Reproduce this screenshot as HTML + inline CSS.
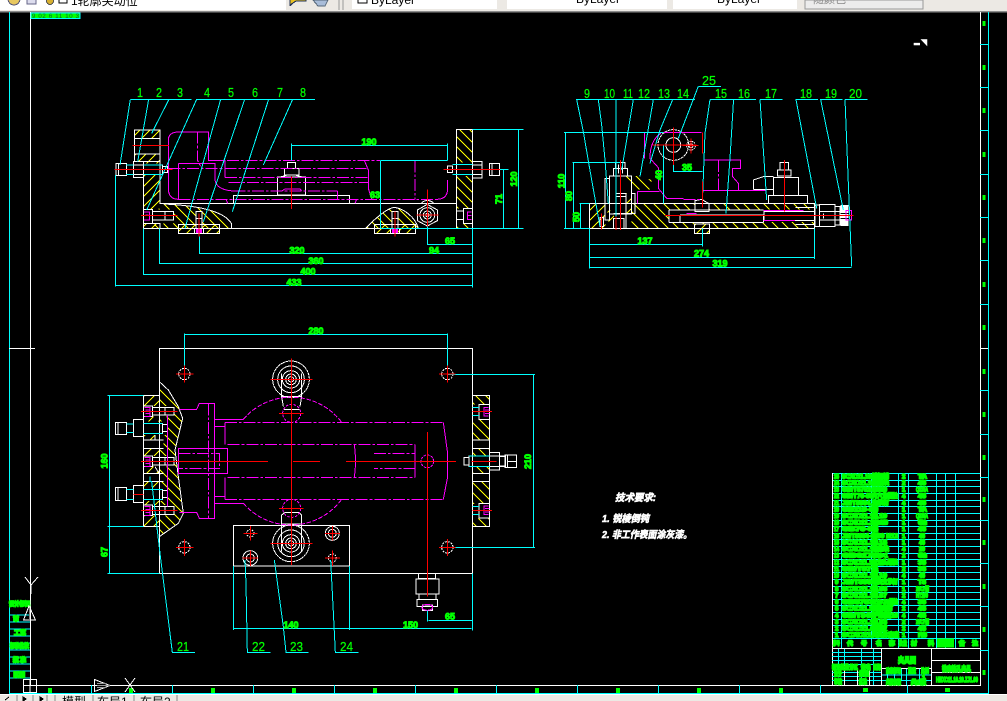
<!DOCTYPE html>
<html><head><meta charset="utf-8"><style>
html,body{margin:0;padding:0;background:#000;width:1007px;height:701px;overflow:hidden}
svg{display:block;shape-rendering:crispEdges}
text{font-family:"Liberation Sans","Noto Sans CJK SC",sans-serif}
.w path,.w circle,.w polygon{fill:none;stroke:#fff}
.c path{fill:none;stroke:#0ff}
.m path,.m circle,.m ellipse{fill:none;stroke:#f0f}
.md path{fill:none;stroke:#f0f;stroke-dasharray:36 6 8 6}
.r path{fill:none;stroke:#f00}
.l text{fill:#0f0;stroke:#0f0;stroke-width:.25;font-size:13px}
.d text{fill:#0f0;stroke:#0f0;stroke-width:1;font-size:9px;font-weight:bold;text-anchor:middle}
.t text{fill:#0f0;stroke:#0f0;stroke-width:1.5;font-size:6px;font-weight:bold}
.n text{fill:#fff;stroke:#fff;stroke-width:.6;font-size:10px;font-weight:bold;font-style:italic}
</style></head><body>
<svg width="1007" height="701" viewBox="0 0 1007 701" xmlns="http://www.w3.org/2000/svg">
<defs>
<pattern id="a" patternUnits="userSpaceOnUse" width="30" height="30"><path d="M0 30L30 0M-3 3L3 -3M27 33L33 27" stroke="#ff0" stroke-width="3"/></pattern>
<pattern id="b" patternUnits="userSpaceOnUse" width="30" height="30"><path d="M0 0L30 30M-3 27L3 33M27 -3L33 3" stroke="#ff0" stroke-width="3"/></pattern>
</defs>
<rect width="1007" height="701" fill="#000"/>

<!-- top toolbar -->
<rect x="0" y="0" width="1007" height="11" fill="#ece9e4"/>
<rect x="0" y="11" width="1007" height="1.5" fill="#8c8c8c"/>
<rect x="0" y="0" width="286" height="10" fill="#fff"/>
<rect x="286" y="0" width="50" height="10" fill="#ece9e4"/>
<rect x="352" y="0" width="145" height="9" fill="#fff"/>
<rect x="507" y="0" width="160" height="9" fill="#fff"/>
<rect x="673" y="0" width="124" height="9" fill="#fff"/>
<rect x="805" y="0" width="118" height="9" fill="#ececec" stroke="#999"/>
<circle cx="14" cy="-1" r="6" fill="#e8c860" stroke="#557"/>
<rect x="27" y="-3" width="9" height="7" fill="#dde" stroke="#668"/>
<circle cx="50" cy="1" r="3.5" fill="#d8b030" stroke="#555"/>
<rect x="59" y="-3" width="8" height="6" fill="#fff" stroke="#000"/>
<path d="M290 5L296 1H306V-2H290ZM292 4l-2 2" fill="#e8c020" stroke="#235"/>
<path d="M313 0H328L325 6H318Z" fill="#a8bcd8" stroke="#567"/>
<path d="M339 0V10M343 0V10" stroke="#999"/>
<rect x="358" y="-3" width="9" height="6" fill="#fff" stroke="#000"/>
<text x="71" y="5" font-size="12" fill="#000">1轮廓尖动位</text>
<text x="371" y="4" font-size="12" fill="#000">ByLayer</text>
<text x="576" y="3" font-size="12" fill="#000">ByLayer</text>
<text x="717" y="3" font-size="12" fill="#000">ByLayer</text>
<text x="813" y="3" font-size="11" fill="#888">随颜色</text>

<!-- frame -->
<path d="M9.5 12V693.5H988.5V12" fill="none" stroke="#0ff"/>
<path d="M30.5 12V685.5H980.5V12M9 348.5H35M980 348.5H988" fill="none" stroke="#fff"/>
<path d="M980 44.5H988M980 87.5H988M980 130.5H988M980 174.5H988M980 217.5H988M980 260.5H988M980 304.5H988M980 390.5H988M980 434.5H988M980 477.5H988M980 520.5H988M980 563.5H988M980 606.5H988M980 650.5H988M91.5 685V693M172.5 685V693M253.5 685V693M334.5 685V693M415.5 685V693M496.5 685V693M577.5 685V693M658.5 685V693M739.5 685V693M820.5 685V693M907.5 685V693" fill="none" stroke="#0ff"/>
<g fill="#0f0">
<rect x="982.5" y="21" width="3" height="5"/><rect x="982.5" y="65" width="3" height="5"/><rect x="982.5" y="108" width="3" height="5"/><rect x="982.5" y="152" width="3" height="5"/><rect x="982.5" y="195" width="3" height="5"/><rect x="982.5" y="238" width="3" height="5"/><rect x="982.5" y="282" width="3" height="5"/><rect x="982.5" y="325" width="3" height="5"/><rect x="982.5" y="369" width="3" height="5"/><rect x="982.5" y="412" width="3" height="5"/><rect x="982.5" y="455" width="3" height="5"/><rect x="982.5" y="497" width="3" height="5"/><rect x="982.5" y="540" width="3" height="5"/><rect x="982.5" y="584" width="3" height="5"/><rect x="982.5" y="627" width="3" height="5"/><rect x="982.5" y="670" width="3" height="5"/>
<rect x="48" y="688" width="4" height="5"/><rect x="129" y="688" width="4" height="5"/><rect x="211" y="688" width="4" height="5"/><rect x="292" y="688" width="4" height="5"/><rect x="373" y="688" width="4" height="5"/><rect x="454" y="688" width="4" height="5"/><rect x="535" y="688" width="4" height="5"/><rect x="616" y="688" width="4" height="5"/><rect x="697" y="688" width="4" height="5"/><rect x="779" y="688" width="4" height="5"/><rect x="863" y="688" width="5" height="4"/><rect x="945" y="688" width="5" height="4"/>
</g>
<rect x="31" y="13" width="49" height="5.5" fill="#0f0" stroke="#0ff"/>
<text x="32" y="18" font-size="6" fill="#063" textLength="47" lengthAdjust="spacing">9 02 6 11 10 3</text>

<!-- left title strip -->
<path d="M9 602H30M9 615H30M9 622H30M9 629H30M9 636H30M9 643H30M9 650H30M9 657H30M9 664H30M9 671H30M9 678H30" fill="none" stroke="#0ff"/>
<g class="t">
<text x="9" y="606" textLength="21" lengthAdjust="spacingAndGlyphs">设计标记</text>
<text x="13" y="621" textLength="4">审</text>
<text x="14" y="635" textLength="12" lengthAdjust="spacing">工 艺</text>
<text x="10" y="648" textLength="19" lengthAdjust="spacingAndGlyphs">标准化校</text>
<text x="13" y="662" textLength="13" lengthAdjust="spacing">批 准</text>
<text x="13" y="677" textLength="12" lengthAdjust="spacingAndGlyphs">日期</text>
</g>

<!-- UCS icons -->
<path d="M25 577L31 585L38 577M31 585V594" fill="none" stroke="#fff"/>
<path d="M29 606L23.5 620H35.5Z" fill="none" stroke="#fff"/>
<path d="M29.5 609V619" stroke="#888"/>
<rect x="23.5" y="679.5" width="13" height="13" fill="none" stroke="#fff"/>
<path d="M30 679V693M23 685.5H37" stroke="#fff"/>
<path d="M94.5 679.5V691.5L110 685.5Z" fill="none" stroke="#fff"/>
<path d="M97 685.5H110M97 683.5H106M97 687.5H106" stroke="#999"/>
<path d="M125 678L135 692M135 678L125 692" stroke="#fff"/>

<!-- FRONT VIEW -->
<g transform="translate(100,80) scale(.33333)" stroke-width="3">
<g>
<rect x="103" y="148" width="77" height="27" fill="url(#a)"/>
<rect x="103" y="222" width="77" height="23" fill="url(#a)"/>
<rect x="130" y="245" width="50" height="200" fill="url(#a)"/>
<path d="M190 372C260 375 370 385 395 432V445H160L180 372Z" fill="url(#b)"/>
<rect x="235" y="433" width="124" height="28" fill="url(#a)"/>
<path d="M797 445C820 420 860 385 882 382C910 385 945 410 955 445Z" fill="url(#b)"/>
<rect x="823" y="433" width="124" height="28" fill="url(#a)"/>
<rect x="1069" y="148" width="49" height="297" fill="url(#b)"/>
<rect x="130" y="250" width="60" height="34" fill="#000"/>
<rect x="130" y="388" width="90" height="42" fill="#000"/>
<rect x="1057" y="248" width="90" height="40" fill="#000"/>
<rect x="1070" y="385" width="48" height="45" fill="#000"/>
<rect x="288" y="395" width="18" height="50" fill="#000"/>
<rect x="876" y="395" width="18" height="50" fill="#000"/>
</g>
<g class="w">
<path d="M103 150H180V245H103ZM103 175H180M103 222H180M130 245V445M180 245V372M130 445H1118M180 370H1069M1069 148H1118V445H1069Z"/>
<path d="M48 250H80V287H48ZM56 250V287M100 245H130V293H100ZM100 255H130M100 283H130M130 255H188V283H130ZM188 260H203V278H188Z"/>
<path d="M1043 258H1057V278H1043ZM1118 244H1146V294H1118ZM1118 255H1146M1118 283H1146M1168 250H1198V287H1168ZM1176 250V287"/>
<path d="M130 388H158V430H130ZM158 395H220V420H158ZM195 395V420M130 430H180V445"/>
<path d="M1070 393H1090V418H1070ZM1090 385H1118V430H1090Z"/>
<path d="M288 395H306V445H288ZM283 445H311V461H283ZM288 415H306M876 395H894V445H876ZM871 445H899V461H871ZM876 415H894"/>
<path d="M563 247H587V265H563ZM553 265H597V285H553ZM540 291L563 285H585L607 291M533 291H617V345H533ZM400 346H748V370H400Z"/>
<path d="M235 433H359V461H235ZM823 433H947V461H823ZM190 372C260 375 370 385 395 432V445M797 445C820 420 860 385 882 382C910 385 945 410 955 445"/>
<polygon points="982,373 1012,390 1012,422 982,438 952,422 952,390"/>
<circle cx="982" cy="405" r="22"/><circle cx="982" cy="405" r="12"/><circle cx="982" cy="405" r="5"/>
<path d="M965 368Q982 355 1000 368"/>
</g>
<g class="md">
<path d="M325 241H840M205 265H800M375 293H805M385 307H805M292 155V240L305 265M400 333H713M945 241V358M235 358H1010"/>
</g>
<g class="m">
<path d="M205 180Q205 157 235 156H325V241H375V293M205 180V325Q205 358 235 358M1010 358Q1043 358 1043 325V300M235 250V358M235 250H345V300Q350 330 400 333M713 333V358M793 241L805 270V325L815 358M378 358L383 370M765 370L770 358M545 333L555 327H600L605 333"/>
<path d="M132 396H148V420H132M136 405H146M1115 396H1102V418H1115M1104 407H1115" stroke-width="3"/>
</g>
<rect x="288" y="447" width="18" height="12" fill="#f0f"/>
<rect x="876" y="447" width="18" height="12" fill="#f0f"/>
<g class="c">
<path d="M575 190V241M575 196H1043M1043 190V241M841 241H1043M841 241V445M841 445H1118M1118 148H1270M1255 148V445M1118 445H1270M1200 268H1225M1210 268V445"/>
<path d="M982 440V493H1118M298 470V520H1118M179 445V550H1118M130 445V583H1118M47 285V620M47 617H1118M1117 445V622M78 255H100M78 283H100M130 255H188M130 283H188M1057 253H1118M1057 283H1118"/>
<path d="M91 58H275M290 58H645M91 58L60 255M146 58L113 245M207 58L155 160M290 58L140 390M362 58L255 445M434 58L310 425M506 58L397 395M578 58L490 255"/>
</g>
<g class="r">
<path d="M97 196H207M43 268H218M123 406H233M1030 268H1200M950 405H1015M982 328V440M297 400V470M885 395V470M574 290V387"/>
</g>
</g>

<!-- SIDE VIEW -->
<g transform="translate(550,70) scale(.33333)" stroke-width="3">
<rect x="118" y="400" width="48" height="75" fill="url(#a)"/>
<rect x="245" y="400" width="548" height="75" fill="url(#b)"/>
<path d="M225 318H270L305 330V358H240Z" fill="url(#b)"/>
<rect x="355" y="420" width="290" height="38" fill="#000"/>
<rect x="640" y="418" width="155" height="38" fill="#000"/>
<rect x="435" y="400" width="42" height="25" fill="#000"/>
<rect x="433" y="462" width="46" height="29" fill="#000"/>
<rect x="433" y="462" width="46" height="29" fill="url(#a)"/>
<rect x="166" y="400" width="79" height="75" fill="#000"/>
<rect x="172" y="420" width="20" height="35" fill="url(#a)"/>
<rect x="226" y="370" width="20" height="60" fill="url(#a)"/>
<g class="w">
<path d="M118 400H793V475H118ZM357 420H640M357 458H640M357 420V458M390 435H640V458M390 435V458M642 425H795V452H642ZM737 412H795M737 464H795"/>
<path d="M795 405H808V470H795ZM808 403H855V425H808ZM808 450H855V470H808ZM808 425H870M808 450H870M855 410H870V465H855ZM820 430V446"/>
<path d="M435 400V392L455 388L475 400ZM435 400H477V425H435ZM433 462H479V491H433Z"/>
<path d="M190 295H232V318H190ZM197 278H225V295H197ZM205 283V310M218 283V310M178 318H245V432H178ZM165 325H178V450H165ZM198 370H228V475H198ZM190 445H222V475H190ZM198 380H228M245 370H255V430H190"/>
<path d="M150 442H160V470H150Z"/>
<path d="M655 376H772V400H655ZM670 322H745V376H670ZM683 300H723V318H683ZM690 278H715V300H690ZM610 358V330L640 320H670M610 358H670"/>
<circle cx="370" cy="225" r="46" stroke-dasharray="8 2"/><circle cx="370" cy="225" r="22"/>
<circle cx="423" cy="227" r="13" stroke-dasharray="5 2"/><circle cx="423" cy="227" r="6"/>
</g>
<rect x="872" y="405" width="23" height="63" fill="#fff"/>
<path d="M872 430H895M872 445H895" stroke="#000" stroke-width="3"/>
<g class="m">
<path d="M283 187H455M283 187V265M333 190Q300 210 300 265L325 293V355L350 385H400M262 365H328M262 365V400M460 270H572V295H548V320L565 340V362H650M458 362H650M410 430H440M640 422H760M640 452H735M888 422H905V450H888Z"/>
</g>
<g class="md"><path d="M505 270V362M400 388H450"/></g>
<g class="c">
<path d="M78 89H435M445 49H513M480 89H618M630 89H698M736 89H804M810 89H878M885 89H953"/>
<path d="M80 89L100 185L118 290L150 470M145 89L155 165L165 270L175 400M198 89V450M250 89L215 300M310 89L270 320M368 89L330 180L300 280M445 49L385 205M480 89L465 190L457 400M550 89V100L540 265L528 430M630 89L650 390M738 89L800 415M812 89L880 420M885 89L905 590"/>
<path d="M42 187H340M47 187V475M67 278H210M70 278V475M88 400H118M92 400V475M42 475H118M340 225V400M370 270V305H457M118 475V596M457 475V530M793 475V567M118 523H457M118 562H793M118 593H905"/>
</g>
<g class="r">
<path d="M212 270V480M198 440V480M155 430V478M703 270V425M308 225H440M370 172V285M398 227H445M423 205V250M457 187V250M457 335V412M345 436H910"/>
</g>
</g>

<!-- TOP VIEW -->
<g transform="translate(100,320) scale(.33333)" stroke-width="3">
<path d="M178 185L205 210L235 260L248 295L225 390L235 470L250 580L235 610L178 650Z" fill="url(#b)"/>
<rect x="130" y="226" width="50" height="393" fill="url(#a)"/>
<rect x="1117" y="226" width="52" height="393" fill="url(#b)"/>
<g fill="#000">
<rect x="130" y="258" width="92" height="32"/><rect x="130" y="408" width="92" height="32"/><rect x="130" y="555" width="92" height="32"/>
<rect x="130" y="305" width="73" height="40"/><rect x="130" y="503" width="73" height="40"/>
<rect x="130" y="360" width="60" height="25"/><rect x="130" y="460" width="60" height="24"/>
<rect x="1117" y="254" width="52" height="44"/><rect x="1117" y="552" width="52" height="44"/>
<rect x="1117" y="360" width="52" height="25"/><rect x="1117" y="408" width="52" height="30"/><rect x="1117" y="460" width="52" height="24"/>
</g>
<g class="w">
<path d="M178 85H1117V760H178ZM130 226H178M130 226V619H178M178 185L205 210L235 260L248 295L225 390L235 470L250 580L235 610L178 650"/>
<path d="M46 307H80V343H46ZM54 307V343M100 298H130V350H100ZM130 310H188V340H130ZM188 314H203V335H188ZM46 503H80V541H46ZM54 503V541M100 497H130V548H100ZM130 508H188V538H130ZM188 512H203V533H188Z"/>
<path d="M130 258H158V290H130ZM158 262H222V285H158ZM195 262V285M130 408H158V440H130ZM158 412H222V435H158ZM195 412V435M130 555H158V587H130ZM158 560H222V583H158ZM195 560V583"/>
<path d="M130 360H190M130 385H190M165 345V360M130 460H190M130 484H190M165 440L180 465"/>
<path d="M1117 226H1169V619H1117M1137 254H1169V298H1137ZM1137 550H1169V594H1137ZM1117 360H1169M1117 385H1169M1117 460H1169M1117 484H1169M1117 262H1137M1117 286H1137M1117 560H1137M1117 583H1137"/>
<path d="M1092 412H1107V435H1092ZM1107 408H1217V440H1107ZM1168 397H1198V450H1168ZM1198 410H1215M1198 438H1215M1215 405H1250V443H1215ZM1222 405V443M1222 424H1250"/>
<path d="M955 760V776H1007V760M948 777H1017V822H948ZM957 822H1008V838H957ZM951 838H1013V860H951ZM982 777V822M967 855H997V872H967Z"/>
<path d="M400 616H748V738H400Z"/>
<circle cx="253" cy="162" r="17" stroke-dasharray="6 3"/><circle cx="253" cy="682" r="17" stroke-dasharray="6 3"/><circle cx="1042" cy="162" r="17" stroke-dasharray="6 3"/><circle cx="1042" cy="682" r="17" stroke-dasharray="6 3"/>
<circle cx="451" cy="640" r="11" stroke-dasharray="5 3"/><circle cx="697" cy="640" r="21"/><circle cx="697" cy="640" r="12"/><circle cx="451" cy="714" r="22"/><circle cx="451" cy="714" r="12"/><circle cx="697" cy="714" r="12" stroke-dasharray="5 3"/>
<circle cx="573" cy="178" r="55" stroke-dasharray="8 1"/><circle cx="573" cy="178" r="40"/><circle cx="573" cy="178" r="26"/><circle cx="573" cy="178" r="16"/><circle cx="573" cy="178" r="8"/>
<circle cx="573" cy="670" r="55" stroke-dasharray="8 1"/><circle cx="573" cy="670" r="40"/><circle cx="573" cy="670" r="26"/><circle cx="573" cy="670" r="16"/><circle cx="573" cy="670" r="8"/>
<path d="M545 160V230H605V160M545 230L550 260M600 260L605 230M552 268H598M545 695V585L555 577H595L605 585V695M545 612H605"/>
</g>
<g class="md">
<path d="M375 307H1030M375 538H1030M383 373H945M383 472H945M235 400H359V446H235M822 400H945V446H822M325 250V595"/>
</g>
<g class="m">
<path d="M238 268H290L298 250H343V595H298L290 577H238M343 298H430M343 320H375M343 530H375M343 550H430M375 307V373M375 472V538M235 385H383V460H235ZM945 373V472M763 373Q770 424 763 472M1030 307L1043 400V470L1030 538M202 285V560"/>
<path d="M430 298A189 189 0 0 1 725 307M430 550A189 189 0 0 0 725 538" stroke-dasharray="14 5"/>
<circle cx="575" cy="280" r="27" stroke-dasharray="8 4"/><circle cx="575" cy="565" r="27" stroke-dasharray="8 4"/><circle cx="982" cy="424" r="19" stroke-dasharray="8 3"/>
<ellipse cx="982" cy="862" rx="16" ry="9"/>
<path d="M133 262H150V290H133M137 270H150M137 280H150M133 412H150V440H133M137 420H150M137 430H150M133 560H150V587H133M137 568H150M137 578H150M1165 262H1152V288H1165M1155 270H1168M1155 280H1168M1165 558H1152V584H1165M1155 566H1168M1155 576H1168"/>
</g>
<g class="c">
<path d="M253 43H1042M253 40V140M1042 40V145M1042 163H1305M1042 682H1305M1300 163V682M22 226H130M28 226V760M22 619H130M22 760H178M400 738V930M748 738V930M400 925H1115M1117 760V932M982 872V905M985 901H1117"/>
<path d="M150 470V485H155L180 700L217 997H285M435 720L438 790L442 997H512M523 720L550 920L558 997H626M692 720L702 915L706 997H776"/>
<path d="M80 312H100M80 338H100M130 310H188M130 340H188M80 508H100M80 538H100M130 508H188M130 538H188M1107 408H1168M1107 440H1168M1117 262H1137M1117 286H1137M1117 560H1137M1117 583H1137"/>
</g>
<g class="r">
<path d="M575 115V735M123 424H504M579 424H660M738 424H1068M982 336V830M537 280H610M537 565H610M512 178H638M512 670H638M228 162H280M253 137V188M228 682H280M253 657V708M1017 162H1067M1042 137V188M1017 682H1067M1042 657V708M430 640H472M451 618V662M675 640H720M697 618V662M428 714H474M451 692V738M675 714H720M697 692V738M123 274H232M123 571H232M1117 274H1176M1117 571H1176M1115 424H1190M100 523H130"/>
</g>
</g>

<!-- labels -->
<g class="l">
<text x="137" y="97" textLength="6" lengthAdjust="spacingAndGlyphs">1</text>
<text x="156" y="97" textLength="6" lengthAdjust="spacingAndGlyphs">2</text>
<text x="177" y="97" textLength="6" lengthAdjust="spacingAndGlyphs">3</text>
<text x="204" y="97" textLength="6" lengthAdjust="spacingAndGlyphs">4</text>
<text x="228" y="97" textLength="6" lengthAdjust="spacingAndGlyphs">5</text>
<text x="252" y="97" textLength="6" lengthAdjust="spacingAndGlyphs">6</text>
<text x="277" y="97" textLength="6" lengthAdjust="spacingAndGlyphs">7</text>
<text x="300" y="97" textLength="6" lengthAdjust="spacingAndGlyphs">8</text>
<text x="584" y="98" textLength="6" lengthAdjust="spacingAndGlyphs">9</text>
<text x="604" y="98" textLength="11" lengthAdjust="spacingAndGlyphs">10</text>
<text x="623" y="98" textLength="10" lengthAdjust="spacingAndGlyphs">11</text>
<text x="638" y="98" textLength="12" lengthAdjust="spacingAndGlyphs">12</text>
<text x="658" y="98" textLength="12" lengthAdjust="spacingAndGlyphs">13</text>
<text x="677" y="98" textLength="12" lengthAdjust="spacingAndGlyphs">14</text>
<text x="702" y="85" textLength="14" lengthAdjust="spacingAndGlyphs">25</text>
<text x="715" y="98" textLength="12" lengthAdjust="spacingAndGlyphs">15</text>
<text x="738" y="98" textLength="12" lengthAdjust="spacingAndGlyphs">16</text>
<text x="765" y="98" textLength="12" lengthAdjust="spacingAndGlyphs">17</text>
<text x="800" y="98" textLength="12" lengthAdjust="spacingAndGlyphs">18</text>
<text x="825" y="98" textLength="12" lengthAdjust="spacingAndGlyphs">19</text>
<text x="849" y="98" textLength="13" lengthAdjust="spacingAndGlyphs">20</text>
<text x="177" y="651" textLength="12" lengthAdjust="spacingAndGlyphs">21</text>
<text x="252" y="651" textLength="13" lengthAdjust="spacingAndGlyphs">22</text>
<text x="290" y="651" textLength="13" lengthAdjust="spacingAndGlyphs">23</text>
<text x="340" y="651" textLength="13" lengthAdjust="spacingAndGlyphs">24</text>
</g>
<g class="d">
<text x="369" y="145">190</text>
<text x="297" y="253.5">320</text><text x="316" y="264">360</text><text x="308" y="274.5">400</text><text x="294" y="285.5">433</text>
<text x="450" y="244">65</text><text x="434" y="253.5">94</text><text x="375" y="198">63</text>
<text transform="translate(517,179) rotate(-90)">120</text><text transform="translate(502,199) rotate(-90)">71</text>
<text x="687" y="170.5">35</text><text x="645" y="244">137</text><text x="701.5" y="256.5">274</text><text x="720" y="266.5">319</text>
<text transform="translate(564.5,181) rotate(-90)">110</text><text transform="translate(572,196) rotate(-90)">80</text><text transform="translate(579.5,217) rotate(-90)">50</text><text transform="translate(662,175) rotate(-90)">40</text>
<text x="316" y="334">280</text><text transform="translate(107.5,461) rotate(-90)">160</text><text transform="translate(107.5,552) rotate(-90)">67</text>
<text x="291" y="628">140</text><text x="410.5" y="628">150</text><text x="450" y="619.5">65</text><text transform="translate(531,461.5) rotate(-90)">210</text>
</g>

<!-- notes -->
<g class="n">
<text x="615" y="501" textLength="41" lengthAdjust="spacingAndGlyphs">技术要求:</text>
<text x="602" y="522" textLength="47" lengthAdjust="spacingAndGlyphs">1. 锐棱倒钝</text>
<text x="602" y="538" textLength="90" lengthAdjust="spacingAndGlyphs">2. 非工作表面涂灰漆。</text>
</g>
<text x="914" y="45" font-size="6" fill="#fff" stroke="#fff" stroke-width=".6" textLength="13" lengthAdjust="spacingAndGlyphs">▬ ◥</text>

<!-- title block -->
<path d="M841.5 473V648M871.5 473V648M898.5 473V648M908.5 473V648M936.5 473V648M945.5 473V648M955.5 473V648M832 473.5H980M832 480.5H980M832 486.5H980M832 493.5H980M832 500.5H980M832 506.5H980M832 513.5H980M832 520.5H980M832 526.5H980M832 533.5H980M832 539.5H980M832 546.5H980M832 553.5H980M832 559.5H980M832 566.5H980M832 572.5H980M832 579.5H980M832 586.5H980M832 592.5H980M832 599.5H980M832 605.5H980M832 612.5H980M832 619.5H980M832 625.5H980M832 632.5H980M832 638.5H980M936 643.5H950" fill="none" stroke="#0ff"/>
<path d="M832.5 473V685M832 648.5H980M881.5 648V685M931.5 648V685M931 660.5H980M931 672.5H980M881.5 668.5H931" fill="none" stroke="#fff"/>
<path d="M838.5 649V665M844.5 649V685M861.5 649V685M873.5 649V685M832 652.5H881M832 656.5H881M832 660.5H881M832 664.5H881M832 672.5H881M832 676.5H881M832 680.5H881" fill="none" stroke="#0ff"/>
<path d="M844.5 665V685M857.5 669V685M869.5 669V685" stroke="#fff" fill="none"/>
<path d="M882 675H931M882 680.5H931M887.5 669V680M894.5 669V680M901.5 669V680M906.5 669V685M919.5 669V685" stroke="#0ff" fill="none"/>
<g class="t">
<text x="834" y="478.5" textLength="5" lengthAdjust="spacingAndGlyphs">25</text>
<text x="834" y="485" textLength="5" lengthAdjust="spacingAndGlyphs">24</text>
<text x="834" y="491.5" textLength="5" lengthAdjust="spacingAndGlyphs">23</text>
<text x="834" y="498" textLength="5" lengthAdjust="spacingAndGlyphs">22</text>
<text x="834" y="505" textLength="5" lengthAdjust="spacingAndGlyphs">21</text>
<text x="834" y="511.5" textLength="5" lengthAdjust="spacingAndGlyphs">20</text>
<text x="834" y="518" textLength="5" lengthAdjust="spacingAndGlyphs">19</text>
<text x="834" y="524.5" textLength="5" lengthAdjust="spacingAndGlyphs">18</text>
<text x="834" y="531" textLength="5" lengthAdjust="spacingAndGlyphs">17</text>
<text x="834" y="538" textLength="5" lengthAdjust="spacingAndGlyphs">16</text>
<text x="834" y="544.5" textLength="5" lengthAdjust="spacingAndGlyphs">15</text>
<text x="834" y="551" textLength="5" lengthAdjust="spacingAndGlyphs">14</text>
<text x="834" y="557.5" textLength="5" lengthAdjust="spacingAndGlyphs">13</text>
<text x="834" y="564.5" textLength="5" lengthAdjust="spacingAndGlyphs">12</text>
<text x="834" y="571" textLength="5" lengthAdjust="spacingAndGlyphs">11</text>
<text x="834" y="577.5" textLength="5" lengthAdjust="spacingAndGlyphs">10</text>
<text x="835" y="584" textLength="3">9</text>
<text x="835" y="591" textLength="3">8</text>
<text x="835" y="597.5" textLength="3">7</text>
<text x="835" y="604" textLength="3">6</text>
<text x="835" y="610.5" textLength="3">5</text>
<text x="835" y="617.5" textLength="3">4</text>
<text x="835" y="624" textLength="3">3</text>
<text x="835" y="630.5" textLength="3">2</text>
<text x="835" y="637" textLength="3">1</text>

<text x="842" y="478.5" textLength="45" lengthAdjust="spacingAndGlyphs">SCXC11.10.20.25</text>
<text x="842" y="485" textLength="42" lengthAdjust="spacingAndGlyphs">SCXC11.10.24</text>
<text x="842" y="491.5" textLength="45" lengthAdjust="spacingAndGlyphs">GB/T5782-2000</text>
<text x="842" y="498" textLength="31" lengthAdjust="spacingAndGlyphs">GB/T70-85</text>
<text x="842" y="505" textLength="43" lengthAdjust="spacingAndGlyphs">JB/T8004.1-95</text>
<text x="842" y="511.5" textLength="36" lengthAdjust="spacingAndGlyphs">GB119-86</text>
<text x="842" y="518" textLength="45" lengthAdjust="spacingAndGlyphs">SCXC11.10.19</text>
<text x="842" y="524.5" textLength="45" lengthAdjust="spacingAndGlyphs">SCXC11.10.18</text>
<text x="842" y="531" textLength="36" lengthAdjust="spacingAndGlyphs">GB70-85</text>
<text x="842" y="538" textLength="56" lengthAdjust="spacingAndGlyphs">JB/T8034-1999 M12</text>
<text x="842" y="544.5" textLength="45" lengthAdjust="spacingAndGlyphs">SCXC11.10.15</text>
<text x="842" y="551" textLength="45" lengthAdjust="spacingAndGlyphs">SCXC11.10.14</text>
<text x="842" y="557.5" textLength="36" lengthAdjust="spacingAndGlyphs">GB6170</text>
<text x="842" y="564.5" textLength="44" lengthAdjust="spacingAndGlyphs">SCXC11.10.12</text>
<text x="842" y="571" textLength="36" lengthAdjust="spacingAndGlyphs">GB/T97.1</text>
<text x="842" y="577.5" textLength="45" lengthAdjust="spacingAndGlyphs">SCXC11.10.10</text>
<text x="842" y="584" textLength="40" lengthAdjust="spacingAndGlyphs">JB/T8004.3</text>
<text x="842" y="591" textLength="45" lengthAdjust="spacingAndGlyphs">SCXC11.10.08</text>
<text x="842" y="597.5" textLength="45" lengthAdjust="spacingAndGlyphs">SCXC11.10.07</text>
<text x="842" y="604" textLength="32" lengthAdjust="spacingAndGlyphs">GB5783</text>
<text x="842" y="610.5" textLength="44" lengthAdjust="spacingAndGlyphs">SCXC11.10.05</text>
<text x="842" y="617.5" textLength="32" lengthAdjust="spacingAndGlyphs">GB/T848</text>
<text x="842" y="624" textLength="45" lengthAdjust="spacingAndGlyphs">SCXC11.10.03</text>
<text x="842" y="630.5" textLength="36" lengthAdjust="spacingAndGlyphs">SCXC11.02</text>
<text x="842" y="637" textLength="40" lengthAdjust="spacingAndGlyphs">SCXC11.01</text>

<text x="872" y="478.5" textLength="17" lengthAdjust="spacingAndGlyphs">销钉销</text>
<text x="872" y="485" textLength="17" lengthAdjust="spacingAndGlyphs">压板块</text>
<text x="872" y="491.5" textLength="15" lengthAdjust="spacingAndGlyphs">M8×20</text>
<text x="872" y="498" textLength="26" lengthAdjust="spacingAndGlyphs">内六角圆柱</text>
<text x="872" y="505" textLength="17" lengthAdjust="spacingAndGlyphs">支承钉</text>
<text x="872" y="511.5" textLength="9">销</text>
<text x="872" y="518" textLength="9">盖</text>
<text x="872" y="524.5" textLength="16" lengthAdjust="spacingAndGlyphs">M6×16</text>
<text x="872" y="531" textLength="9">螺</text>
<text x="872" y="538" textLength="9">钉</text>
<text x="872" y="544.5" textLength="9">杆</text>
<text x="872" y="551" textLength="17" lengthAdjust="spacingAndGlyphs">定位块</text>
<text x="872" y="557.5" textLength="16" lengthAdjust="spacingAndGlyphs">M10×1</text>
<text x="872" y="564.5" textLength="26" lengthAdjust="spacingAndGlyphs">六角头螺栓</text>
<text x="872" y="571" textLength="9">垫</text>
<text x="872" y="577.5" textLength="9">座</text>
<text x="872" y="584" textLength="26" lengthAdjust="spacingAndGlyphs">球头支承钉</text>
<text x="872" y="591" textLength="9">轴</text>
<text x="872" y="597.5" textLength="9">套</text>
<text x="872" y="604" textLength="26" lengthAdjust="spacingAndGlyphs">M10×30螺栓</text>
<text x="872" y="610.5" textLength="21" lengthAdjust="spacingAndGlyphs">调整螺钉</text>
<text x="872" y="617.5" textLength="26" lengthAdjust="spacingAndGlyphs">平垫圈10</text>
<text x="872" y="624" textLength="9">板</text>
<text x="872" y="630.5" textLength="15" lengthAdjust="spacingAndGlyphs">侧板</text>
<text x="872" y="637" textLength="27" lengthAdjust="spacingAndGlyphs">夹具体底座</text>

<text x="902" y="478.5">2</text><text x="902" y="485">2</text><text x="902" y="491.5">1</text><text x="902" y="498">4</text><text x="902" y="505">4</text><text x="902" y="511.5">1</text><text x="902" y="518">1</text><text x="902" y="524.5">1</text><text x="902" y="531">1</text><text x="902" y="538">1</text><text x="902" y="544.5">1</text><text x="902" y="551">4</text><text x="902" y="557.5">2</text><text x="902" y="564.5">1</text><text x="902" y="571">2</text><text x="902" y="577.5">4</text><text x="902" y="584">1</text><text x="902" y="591">1</text><text x="902" y="597.5">2</text><text x="902" y="604">4</text><text x="902" y="610.5">2</text><text x="902" y="617.5">4</text><text x="902" y="624">2</text><text x="902" y="630.5">2</text><text x="902" y="637">1</text>

<text x="918" y="478.5" textLength="9">T10A</text>
<text x="918" y="485" textLength="8" lengthAdjust="spacingAndGlyphs">45</text>
<text x="916" y="491.5" textLength="12" lengthAdjust="spacingAndGlyphs">Q235A</text>
<text x="918" y="498" textLength="8" lengthAdjust="spacingAndGlyphs">45</text>
<text x="918" y="505" textLength="8" lengthAdjust="spacingAndGlyphs">45</text>
<text x="918" y="511.5" textLength="9">T8A</text>
<text x="916" y="518" textLength="12" lengthAdjust="spacingAndGlyphs">Q235A</text>
<text x="918" y="524.5" textLength="9">65Mn</text>
<text x="918" y="531" textLength="8" lengthAdjust="spacingAndGlyphs">45</text>
<text x="919" y="538" textLength="6" lengthAdjust="spacingAndGlyphs">45</text>
<text x="919" y="544.5" textLength="6" lengthAdjust="spacingAndGlyphs">45</text>
<text x="919" y="551" textLength="6" lengthAdjust="spacingAndGlyphs">20</text>
<text x="918" y="557.5" textLength="9">65Mn</text>
<text x="918" y="564.5" textLength="8" lengthAdjust="spacingAndGlyphs">35</text>
<text x="918" y="571" textLength="8" lengthAdjust="spacingAndGlyphs">35</text>
<text x="919" y="577.5" textLength="6" lengthAdjust="spacingAndGlyphs">45</text>
<text x="918" y="584" textLength="8" lengthAdjust="spacingAndGlyphs">T8</text>
<text x="916" y="591" textLength="13" lengthAdjust="spacingAndGlyphs">20Cr钢</text>
<text x="916" y="597.5" textLength="12" lengthAdjust="spacingAndGlyphs">HT200</text>
<text x="918" y="604" textLength="8" lengthAdjust="spacingAndGlyphs">35</text>
<text x="918" y="610.5" textLength="8" lengthAdjust="spacingAndGlyphs">45</text>
<text x="918" y="617.5" textLength="8" lengthAdjust="spacingAndGlyphs">45</text>
<text x="916" y="624" textLength="13" lengthAdjust="spacingAndGlyphs">20Cr钢</text>
<text x="918" y="630.5" textLength="8" lengthAdjust="spacingAndGlyphs">45</text>
<text x="918" y="637" textLength="9">HT25</text>

<text x="833" y="645.5" textLength="7" lengthAdjust="spacingAndGlyphs">序号</text>
<text x="847" y="645.5" textLength="5">代</text>
<text x="861" y="645.5" textLength="4">号</text>
<text x="876" y="645.5" textLength="4">名</text>
<text x="889" y="645.5" textLength="5">称</text>
<text x="899" y="645.5" textLength="8" lengthAdjust="spacingAndGlyphs">数量</text>
<text x="911" y="645.5" textLength="5">材</text>
<text x="928" y="645.5" textLength="4">料</text>
<text x="959" y="645.5" textLength="3">备</text>
<text x="972" y="645.5" textLength="5">注</text>
<text x="898" y="663" textLength="18" lengthAdjust="spacingAndGlyphs" style="font-size:8px">夹具图</text>
<text x="942" y="671" textLength="29" lengthAdjust="spacingAndGlyphs" style="font-size:7px">铣床钻孔夹具</text>
<text x="936" y="682" textLength="42" lengthAdjust="spacingAndGlyphs" style="font-size:7px">HBXC11.10.20.ZJ1.00</text>
<text x="832" y="669.5" textLength="26" lengthAdjust="spacingAndGlyphs">标记处数分区</text>
<text x="861" y="669.5" textLength="10" lengthAdjust="spacingAndGlyphs">签名</text>
<text x="873" y="669.5" textLength="8" lengthAdjust="spacingAndGlyphs">日期</text>
<text x="834" y="676" textLength="8" lengthAdjust="spacingAndGlyphs">设计</text>
<text x="859" y="676" textLength="10" lengthAdjust="spacingAndGlyphs">标准</text>
<text x="834" y="684" textLength="8" lengthAdjust="spacingAndGlyphs">审核</text>
<text x="859" y="684" textLength="8" lengthAdjust="spacingAndGlyphs">批准</text>
<text x="886" y="673" textLength="15" lengthAdjust="spacingAndGlyphs">阶段标记</text>
<text x="908" y="673" textLength="8" lengthAdjust="spacingAndGlyphs">重量</text>
<text x="921" y="673" textLength="8" lengthAdjust="spacingAndGlyphs">比例</text>
<text x="922" y="679" textLength="5">1</text>
<text x="886" y="684.5" textLength="15" lengthAdjust="spacingAndGlyphs">共张第张</text>
<text x="911" y="684.5" textLength="15" lengthAdjust="spacingAndGlyphs">共1张</text>
</g>
<rect x="937" y="638.5" width="17" height="9" fill="#0f0"/>

<!-- bottom tabs -->
<rect x="0" y="694" width="1007" height="7" fill="#ece9e4"/>
<path d="M0 694.5H1007" stroke="#fff"/>
<path d="M17 695V701M33 695V701M47 695V701M55 695V701M93 695V701M134 695V701M177 695V701" stroke="#888"/>
<path d="M5 700L9 697M23 697V701L26 699ZM40 697V701L43 699Z" fill="#000" stroke="#000"/>
<text x="62" y="706" font-size="12" fill="#000">模型</text>
<text x="97" y="706" font-size="12" fill="#000">布局1</text>
<text x="140" y="706" font-size="12" fill="#000">布局2</text>
</svg>
</body></html>
